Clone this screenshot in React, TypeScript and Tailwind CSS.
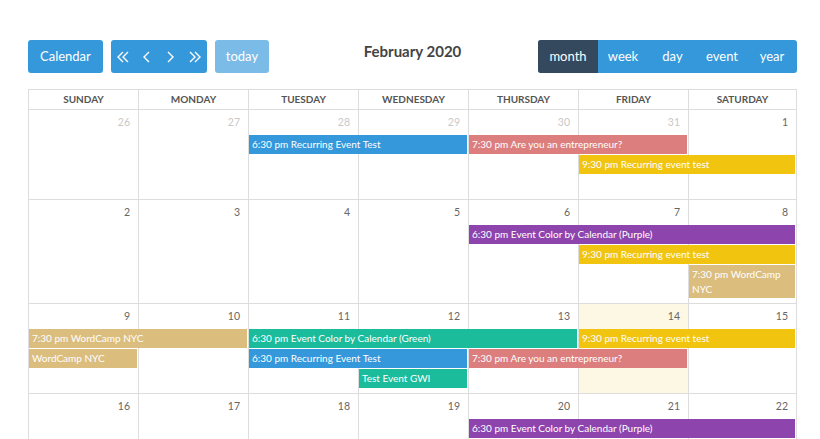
import clsx from "clsx";

type CalEvent = { col: number; span: number; row: number; label: string; color: string; wrap?: boolean };
type Week = { days: number[]; other: number[]; today?: number; height: string; rows: string; events: CalEvent[] };

const colStart = ["", "col-start-1", "col-start-2", "col-start-3", "col-start-4", "col-start-5", "col-start-6", "col-start-7"];
const colSpan = ["", "col-span-1", "col-span-2", "col-span-3", "col-span-4", "col-span-5", "col-span-6", "col-span-7"];
const rowStart = ["", "row-start-1", "row-start-2", "row-start-3", "row-start-4"];

const BLUE = "bg-[#3498db]";
const RED = "bg-[#dc7e7e]";
const YELLOW = "bg-[#f1c40f]";
const PURPLE = "bg-[#8e44ad]";
const TAN = "bg-[#dbbd7e]";
const GREEN = "bg-[#1abc9c]";

// six fixed columns, the last one takes what is left
const COLS = "grid-cols-[110px_110px_110px_110px_110px_110px_1fr]";

const dayNames = ["Sunday", "Monday", "Tuesday", "Wednesday", "Thursday", "Friday", "Saturday"];

const weeks: Week[] = [
  {
    days: [26, 27, 28, 29, 30, 31, 1],
    other: [0, 1, 2, 3, 4, 5],
    height: "h-[90px]",
    rows: "grid-rows-[25px_20px_20px_1fr]",
    events: [
      { col: 3, span: 2, row: 2, label: "6:30 pm Recurring Event Test", color: BLUE },
      { col: 5, span: 2, row: 2, label: "7:30 pm Are you an entrepreneur?", color: RED },
      { col: 6, span: 2, row: 3, label: "9:30 pm Recurring event test", color: YELLOW },
    ],
  },
  {
    days: [2, 3, 4, 5, 6, 7, 8],
    other: [],
    height: "h-[104px]",
    rows: "grid-rows-[25px_20px_20px_auto_1fr]",
    events: [
      { col: 5, span: 3, row: 2, label: "6:30 pm Event Color by Calendar (Purple)", color: PURPLE },
      { col: 6, span: 2, row: 3, label: "9:30 pm Recurring event test", color: YELLOW },
      { col: 7, span: 1, row: 4, label: "7:30 pm WordCamp NYC", color: TAN, wrap: true },
    ],
  },
  {
    days: [9, 10, 11, 12, 13, 14, 15],
    other: [],
    today: 5,
    height: "h-[90px]",
    rows: "grid-rows-[25px_20px_20px_20px_1fr]",
    events: [
      { col: 1, span: 2, row: 2, label: "7:30 pm WordCamp NYC", color: TAN },
      { col: 3, span: 3, row: 2, label: "6:30 pm Event Color by Calendar (Green)", color: GREEN },
      { col: 6, span: 2, row: 2, label: "9:30 pm Recurring event test", color: YELLOW },
      { col: 1, span: 1, row: 3, label: "WordCamp NYC", color: TAN },
      { col: 3, span: 2, row: 3, label: "6:30 pm Recurring Event Test", color: BLUE },
      { col: 5, span: 2, row: 3, label: "7:30 pm Are you an entrepreneur?", color: RED },
      { col: 4, span: 1, row: 4, label: "Test Event GWI", color: GREEN },
    ],
  },
  {
    days: [16, 17, 18, 19, 20, 21, 22],
    other: [],
    height: "h-[90px]",
    rows: "grid-rows-[25px_20px_1fr]",
    events: [{ col: 5, span: 3, row: 2, label: "6:30 pm Event Color by Calendar (Purple)", color: PURPLE }],
  },
];

// chevron glyphs: "<<", "<", ">", ">>"
const chevrons = [
  { w: 12, lines: ["6,1 1,6 6,11", "11,1 6,6 11,11"] },
  { w: 7, lines: ["6,1 1,6 6,11"] },
  { w: 7, lines: ["1,1 6,6 1,11"] },
  { w: 12, lines: ["1,1 6,6 1,11", "6,1 11,6 6,11"] },
];

function Toolbar() {
  return (
    <div className="grid grid-cols-[1fr_auto_1fr] items-start">
      <div className="flex gap-2">
        <button className="h-[33px] rounded-[3px] bg-[#3498db] px-3 text-[13px] text-white">Calendar</button>
        <div className="flex h-[33px] overflow-hidden rounded-[3px] bg-[#3498db] text-white">
          {chevrons.map((c, i) => (
            <button key={i} className="flex w-6 items-center justify-center">
              <svg width={c.w} height="12" viewBox={`0 0 ${c.w} 12`} fill="none" stroke="currentColor" strokeWidth="1.4">
                {c.lines.map((p) => (
                  <polyline key={p} points={p} />
                ))}
              </svg>
            </button>
          ))}
        </div>
        <button className="h-[33px] rounded-[3px] bg-[#3498db] px-[11px] text-[13px] text-white opacity-65">today</button>
      </div>
      <h2 className="mt-[2px] text-[15px] font-bold leading-[18px] text-[#444]">February 2020</h2>
      <div className="flex justify-end">
        <div className="flex h-[33px] overflow-hidden rounded-[3px] bg-[#3498db] text-[13px] text-white">
          <button className="w-[60px] bg-[#34495e]">month</button>
          <button className="w-[50px]">week</button>
          <button className="w-[49px]">day</button>
          <button className="w-[50px]">event</button>
          <button className="w-[50px]">year</button>
        </div>
      </div>
    </div>
  );
}

function WeekRow({ week }: { week: Week }) {
  return (
    <div className={clsx("grid border-b border-[#ddd]", COLS, week.height, week.rows)}>
      {week.days.map((d, i) => (
        <div
          key={d}
          className={clsx(
            "row-span-full flex justify-end border-r border-[#ddd] pt-[6px] pr-[8px] text-[10.5px] leading-[12px]",
            colStart[i + 1],
            week.today === i && "bg-[#fcf8e3]",
            week.other.includes(i) ? "text-[#c8c8c8]" : "text-[#666]"
          )}
        >
          {d}
        </div>
      ))}
      {week.events.map((ev, i) => (
        <div
          key={i}
          className={clsx(
            "mr-[2px] self-start overflow-hidden px-[3px] py-[2px] text-[10px] text-white",
            ev.wrap ? "leading-[14.5px]" : "whitespace-nowrap leading-[15px]",
            colStart[ev.col],
            colSpan[ev.span],
            rowStart[ev.row],
            ev.color
          )}
        >
          {ev.label}
        </div>
      ))}
    </div>
  );
}

export default function App() {
  return (
    <div className="h-[439px] w-[820px] overflow-hidden bg-white font-['Lato',sans-serif]">
      <div className="ml-[28px] w-[769px] pt-[40px]">
        <Toolbar />
        <div className="mt-[16px] border-l border-[#ddd]">
          <div className={clsx("grid h-[21px] border-t border-b border-[#ddd]", COLS)}>
            {dayNames.map((n) => (
              <div
                key={n}
                className="flex items-center justify-center border-r border-[#ddd] text-[10px] font-bold uppercase text-[#555]"
              >
                {n}
              </div>
            ))}
          </div>
          {weeks.map((w, i) => (
            <WeekRow key={i} week={w} />
          ))}
        </div>
      </div>
    </div>
  );
}
